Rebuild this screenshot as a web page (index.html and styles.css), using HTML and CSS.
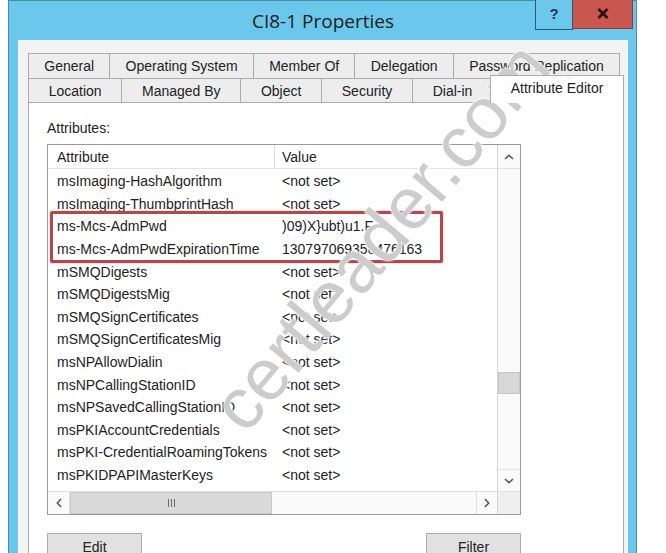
FILE: index.html
```html
<!DOCTYPE html>
<html lang="en">
<head>
    <meta charset="UTF-8">
    <title>CI8-1 Properties</title>
    <link rel="stylesheet" href="styles.css">
</head>
<body>
    <div class="window">
        <div class="titlebar">
            <span class="title">CI8-1 Properties</span>
        </div>
        <div class="caption-buttons">
            <div class="cap-btn help">?</div>
            <div class="cap-btn close">
                <svg width="12" height="11" viewBox="0 0 12 11"><path d="M1.5 1 L10.5 10 M10.5 1 L1.5 10" stroke="#2b1010" stroke-width="2.6" fill="none"/></svg>
            </div>
        </div>

        <div class="client">
            <div class="tabs">
                <div class="tab-row back">
                    <div class="tab">General</div>
                    <div class="tab">Operating System</div>
                    <div class="tab">Member Of</div>
                    <div class="tab">Delegation</div>
                    <div class="tab">Password Replication</div>
                </div>
                <div class="tab-row front">
                    <div class="tab">Location</div>
                    <div class="tab">Managed By</div>
                    <div class="tab">Object</div>
                    <div class="tab">Security</div>
                    <div class="tab">Dial-in</div>
                    <div class="tab selected">Attribute Editor</div>
                </div>
            </div>

            <div class="tab-page">
                <div class="field-label">Attributes:</div>

                <div class="listview">
                    <div class="lv-header">
                        <div class="col-name">Attribute</div>
                        <div class="col-value">Value</div>
                    </div>

                    <div class="lv-rows">
                        <div class="lv-row"><div class="col-name">msImaging-HashAlgorithm</div><div class="col-value">&lt;not set&gt;</div></div>
                        <div class="lv-row"><div class="col-name">msImaging-ThumbprintHash</div><div class="col-value">&lt;not set&gt;</div></div>
                        <div class="lv-row"><div class="col-name">ms-Mcs-AdmPwd</div><div class="col-value">)09)X}ubt)u1.F</div></div>
                        <div class="lv-row"><div class="col-name">ms-Mcs-AdmPwdExpirationTime</div><div class="col-value">130797069358476163</div></div>
                        <div class="lv-row"><div class="col-name">mSMQDigests</div><div class="col-value">&lt;not set&gt;</div></div>
                        <div class="lv-row"><div class="col-name">mSMQDigestsMig</div><div class="col-value">&lt;not set&gt;</div></div>
                        <div class="lv-row"><div class="col-name">mSMQSignCertificates</div><div class="col-value">&lt;not set&gt;</div></div>
                        <div class="lv-row"><div class="col-name">mSMQSignCertificatesMig</div><div class="col-value">&lt;not set&gt;</div></div>
                        <div class="lv-row"><div class="col-name">msNPAllowDialin</div><div class="col-value">&lt;not set&gt;</div></div>
                        <div class="lv-row"><div class="col-name">msNPCallingStationID</div><div class="col-value">&lt;not set&gt;</div></div>
                        <div class="lv-row"><div class="col-name">msNPSavedCallingStationID</div><div class="col-value">&lt;not set&gt;</div></div>
                        <div class="lv-row"><div class="col-name">msPKIAccountCredentials</div><div class="col-value">&lt;not set&gt;</div></div>
                        <div class="lv-row"><div class="col-name">msPKI-CredentialRoamingTokens</div><div class="col-value">&lt;not set&gt;</div></div>
                        <div class="lv-row"><div class="col-name">msPKIDPAPIMasterKeys</div><div class="col-value">&lt;not set&gt;</div></div>
                    </div>

                    <!-- vertical scrollbar spans header + rows -->
                    <div class="vscroll">
                        <div class="sb-btn up">
                            <svg width="10" height="6" viewBox="0 0 10 6"><polyline points="1,5 5,1.3 9,5" fill="none" stroke="#5a5a5a" stroke-width="1.6"/></svg>
                        </div>
                        <div class="sb-track">
                            <div class="sb-thumb-v"></div>
                        </div>
                        <div class="sb-btn down">
                            <svg width="10" height="6" viewBox="0 0 10 6"><polyline points="1,1 5,4.7 9,1" fill="none" stroke="#5a5a5a" stroke-width="1.6"/></svg>
                        </div>
                    </div>

                    <div class="hscroll">
                        <div class="sb-btn left">
                            <svg width="6" height="10" viewBox="0 0 6 10"><polyline points="5,1 1.3,5 5,9" fill="none" stroke="#5a5a5a" stroke-width="1.6"/></svg>
                        </div>
                        <div class="sb-thumb-h">
                            <svg width="9" height="8" viewBox="0 0 9 8"><path d="M1.5 0 V8 M4.5 0 V8 M7.5 0 V8" stroke="#6a6a6a" stroke-width="1"/></svg>
                        </div>
                        <div class="sb-fill"></div>
                        <div class="sb-btn right">
                            <svg width="6" height="10" viewBox="0 0 6 10"><polyline points="1,1 4.7,5 1,9" fill="none" stroke="#5a5a5a" stroke-width="1.6"/></svg>
                        </div>
                    </div>
                    <div class="sb-corner"></div>
                </div>

                <div class="button-row">
                    <div class="push-btn">Edit</div>
                    <div class="push-btn">Filter</div>
                </div>
            </div>
        </div>
    </div>

    <!-- annotation frame around the LAPS attributes -->
    <div class="highlight"></div>

    <div class="watermark">certleader.com</div>
</body>
</html>
```

FILE: styles.css
```css
* {
    box-sizing: border-box;
}

body {
    margin: 0;
    width: 666px;
    height: 553px;
    overflow: hidden;
    position: relative;
    background: #ffffff;
    font-family: "Liberation Sans", Arial, sans-serif;
    font-size: 14px;
    color: #222222;
}

/* window frame */
.window {
    position: relative;
    margin-left: 8px;
    width: 629px;
    height: 600px;
    background: #6cc7ed;
    border: 1px solid #4b8cab;
    border-bottom: none;
    padding: 0 8px 0 9px;
    display: flex;
    flex-direction: column;
}

.titlebar {
    height: 39px;
    display: flex;
    align-items: center;
    justify-content: center;
}

.title {
    font-family: "Open Sans", "Noto Sans", sans-serif;
    font-size: 19px;
    color: #202020;
}

.caption-buttons {
    position: absolute;
    top: -1px;
    right: 3px;
    display: flex;
}

.cap-btn {
    display: flex;
    align-items: center;
    justify-content: center;
}

.cap-btn.help {
    width: 38px;
    height: 30px;
    border: 1px solid #2c5a78;
    border-top: none;
    background: #6cc7ed;
    font-weight: bold;
    font-size: 15px;
    color: #1c3654;
    padding-bottom: 2px;
}

.cap-btn.close {
    width: 60px;
    height: 29px;
    background: #c9574f;
    border: 1px solid #8e3b35;
    border-top: none;
    border-left: none;
    padding-bottom: 2px;
}

/* dialog client area */
.client {
    flex: 1;
    background: #f3f3f3;
    padding: 13px 4px 0 10px;
    display: flex;
    flex-direction: column;
}

.tabs {
    display: flex;
    flex-direction: column;
}

.tab-row {
    display: flex;
    height: 25px;
}

.tab-row.back {
    margin-right: 4px;
}

.tab {
    flex: 1 1 auto;
    padding: 0 4px 1px;
    margin-left: -1px;
    border: 1px solid #acacac;
    border-bottom: none;
    background: #ededed;
    display: flex;
    align-items: center;
    justify-content: center;
    white-space: nowrap;
}

.tab:first-child {
    margin-left: 0;
}

.tab.selected {
    position: relative;
    z-index: 2;
    height: 28px;
    margin-top: -3px;
    margin-left: -3px;
    padding-bottom: 4px;
    background: #ffffff;
}

.tab-page {
    flex: 1;
    margin-top: -1px;
    background: #ffffff;
    border: 1px solid #acacac;
    padding: 17px 0 0 18px;
}

.field-label {
    line-height: 17px;
    margin-bottom: 7px;
}

/* attribute list */
.listview {
    width: 474px;
    border: 1px solid #9a9a9a;
    display: grid;
    grid-template-columns: 1fr 23px;
    grid-template-rows: 24px 322px 23px;
    background: #ffffff;
}

.lv-header {
    grid-column: 1;
    grid-row: 1;
    display: flex;
    align-items: center;
    border-bottom: 1px solid #e3e3e3;
}

.lv-header .col-name {
    border-right: 1px solid #dcdcdc;
    height: 100%;
    display: flex;
    align-items: center;
}

.col-name {
    width: 227px;
    padding-left: 9px;
    white-space: nowrap;
    overflow: hidden;
}

.col-value {
    padding-left: 7px;
    white-space: nowrap;
}

.lv-rows {
    grid-column: 1;
    grid-row: 2;
    overflow: hidden;
    padding-top: 1px;
}

.lv-row {
    display: flex;
    align-items: center;
    height: 22.6px;
}

.vscroll {
    grid-column: 2;
    grid-row: 1 / 3;
    display: flex;
    flex-direction: column;
    border-left: 1px solid #d6d6d6;
    background: #fafafa;
}

.sb-btn {
    display: flex;
    align-items: center;
    justify-content: center;
    background: #fafafa;
}

.sb-btn.up {
    height: 24px;
    border-bottom: 1px solid #e2e2e2;
}

.sb-btn.down {
    height: 22px;
    border-top: 1px solid #e2e2e2;
}

.sb-track {
    flex: 1;
    padding-top: 203px;
}

.sb-thumb-v {
    height: 22px;
    background: #d8d8d8;
    border: 1px solid #c6c6c6;
}

.hscroll {
    grid-column: 1;
    grid-row: 3;
    display: flex;
    border-top: 1px solid #e0e0e0;
    background: #fafafa;
}

.sb-btn.left {
    width: 22px;
    border-right: 1px solid #e0e0e0;
}

.sb-btn.right {
    width: 21px;
    border-left: 1px solid #e0e0e0;
}

.sb-thumb-h {
    width: 202px;
    background: #dadada;
    border: 1px solid #c8c8c8;
    display: flex;
    align-items: center;
    justify-content: center;
}

.sb-fill {
    flex: 1;
}

.sb-corner {
    grid-column: 2;
    grid-row: 3;
    background: #efefef;
    border-top: 1px solid #e0e0e0;
    border-left: 1px solid #d6d6d6;
}

.button-row {
    width: 474px;
    margin-top: 18px;
    display: flex;
    justify-content: space-between;
}

.push-btn {
    width: 95px;
    height: 28px;
    background: #e1e1e1;
    border: 1px solid #adadad;
    display: flex;
    align-items: center;
    justify-content: center;
    padding-bottom: 1px;
}

/* overlays */
.highlight {
    position: absolute;
    left: 50px;
    top: 211px;
    width: 393px;
    height: 52px;
    border: 3px solid #b3474b;
    border-radius: 2px;
    box-shadow: 0 0 2px rgba(179, 71, 75, 0.6);
}

.watermark {
    position: absolute;
    left: 380px;
    top: 236px;
    transform: translate(-50%, -50%) rotate(-50deg);
    font-family: "Liberation Sans", Arial, sans-serif;
    font-size: 73px;
    color: #cccccc;
    white-space: nowrap;
    text-shadow: 0 0 2px #fff, 0 0 2px #fff, 0 0 3px #fff;
}
```
